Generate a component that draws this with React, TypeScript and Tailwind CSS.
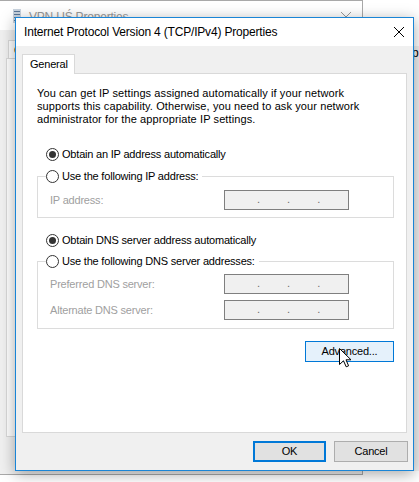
import React from "react";

const font = "font-['Liberation_Sans',Arial,sans-serif]";
const ui = "text-[11px] leading-[13px] tracking-[-0.2px]";

function Radio({ checked, label }: { checked?: boolean; label: string }) {
  return (
    <div className="flex items-center h-[13px]">
      <span className="w-[13px] h-[13px] rounded-full border border-[#333333] bg-white flex items-center justify-center shrink-0">
        {checked && <span className="w-[7px] h-[7px] rounded-full bg-[#333333]" />}
      </span>
      <span className={`ml-[3px] ${ui} text-black whitespace-nowrap`}>{label}</span>
    </div>
  );
}

function IpBox() {
  return (
    <div className="w-[125px] h-[20px] border border-[#7f7f7f] bg-[#f0f0f0] flex items-end pb-[4px] pl-[32px] gap-[27px] text-[11px] leading-[11px] text-[#6d6d6d]">
      <span>.</span>
      <span>.</span>
      <span>.</span>
    </div>
  );
}

function Row({ label }: { label: string }) {
  return (
    <div className="flex items-center">
      <span className={`w-[186px] pl-[12px] ${ui} text-[#a0a0a0] whitespace-nowrap`}>{label}</span>
      <IpBox />
    </div>
  );
}

function Cursor() {
  return (
    <svg width="13" height="20" viewBox="0 0 13 20" className="absolute left-[339px] top-[348px]">
      <path
        d="M0.5 0.5 L0.5 16.5 L4.5 12.8 L7.2 18.8 L9.6 17.8 L7 11.8 L12 11.8 Z"
        fill="#ffffff"
        stroke="#000000"
        strokeWidth="1"
      />
    </svg>
  );
}

export default function App() {
  return (
    <div className={`relative w-[419px] h-[482px] overflow-hidden bg-white ${font}`}>
      {/* far-back window sliver */}
      <div className="absolute left-[400px] top-[46px] w-[19px] h-[425px] bg-[#f0f0f0]">
        <span className="block ml-[12px] mt-[1px] text-[12px] leading-[13px] text-black">p</span>
      </div>

      {/* back window */}
      <div className="absolute left-0 top-0 w-[363px] h-[475px] border-t border-r border-b border-[#a9a9a9] bg-[#f0f0f0] flex flex-col">
        <div className="h-[29px] bg-white flex items-center shrink-0">
          <svg width="8" height="14" viewBox="0 0 8 14" className="ml-[13px]">
            <rect x="0" y="0" width="8" height="14" fill="#c9d3de" />
            <rect x="1" y="2" width="6" height="1" fill="#5b7696" />
            <rect x="1" y="5" width="6" height="1" fill="#5b7696" />
            <rect x="1" y="8" width="6" height="1" fill="#5b7696" />
            <rect x="1" y="11" width="6" height="1" fill="#5b7696" />
          </svg>
          <span className="ml-[8px] text-[12px] tracking-[-0.2px] text-[#999999] mt-[3px]">VPN UŚ Properties</span>
          <svg width="10" height="10" viewBox="0 0 10 10" className="ml-auto mr-[11px] mt-[3px]">
            <path d="M0 0 L10 10 M10 0 L0 10" stroke="#9a9a9a" strokeWidth="1" />
          </svg>
        </div>
        <div className="pl-[6px] pt-[10px] flex flex-col">
          <div className={`ml-[2px] w-[40px] h-[18px] border-t border-l border-r border-[#d9d9d9] bg-white pl-[5px] ${ui} leading-[18px] text-black`}>
            G
          </div>
          <div className="w-[352px] h-[379px] border border-[#d9d9d9] bg-white" />
        </div>
      </div>

      {/* front window */}
      <div className="absolute left-[15px] top-[17px] w-[399px] h-[454px] border border-[#1a85d6] bg-[#f0f0f0] flex flex-col shadow-[0_3px_14px_rgba(0,0,0,0.35)]">
        <div className="h-[28px] bg-white flex items-center shrink-0">
          <span className="ml-[8px] text-[12px] tracking-[-0.18px] text-black whitespace-nowrap">
            Internet Protocol Version 4 (TCP/IPv4) Properties
          </span>
          <svg width="10" height="10" viewBox="0 0 10 10" className="ml-auto mr-[9px]">
            <path d="M0 0 L10 10 M10 0 L0 10" stroke="#000000" strokeWidth="1" />
          </svg>
        </div>

        <div className="flex-1 flex flex-col px-[6px] pt-[8px]">
          <div className={`relative z-10 w-[53px] h-[20px] -mb-px border-t border-l border-r border-[#d9d9d9] bg-white pl-[7px] ${ui} leading-[18px] text-black`}>
            General
          </div>
          <div className="w-[385px] h-[360px] border border-[#d9d9d9] bg-white pl-[14px] pr-[12px] pt-[13px] flex flex-col">
            <p className="text-[11px] leading-[13px] tracking-[0.1px] text-black whitespace-nowrap">
              You can get IP settings assigned automatically if your network
              <br />
              supports this capability. Otherwise, you need to ask your network
              <br />
              administrator for the appropriate IP settings.
            </p>

            <div className="mt-[22px] ml-[9px]">
              <Radio checked label="Obtain an IP address automatically" />
            </div>

            <fieldset className="mt-[9px] border border-[#dcdcdc] p-0 pb-[7px] m-0 min-w-0">
              <legend className="ml-[8px] pr-[4px]">
                <Radio label="Use the following IP address:" />
              </legend>
              <div className="mt-[7px]">
                <Row label="IP address:" />
              </div>
            </fieldset>

            <div className="mt-[16px] ml-[9px]">
              <Radio checked label="Obtain DNS server address automatically" />
            </div>

            <fieldset className="mt-[8px] border border-[#dcdcdc] p-0 pb-[8px] m-0 min-w-0">
              <legend className="ml-[8px] pr-[4px]">
                <Radio label="Use the following DNS server addresses:" />
              </legend>
              <div className="mt-[6px] flex flex-col gap-[6px]">
                <Row label="Preferred DNS server:" />
                <Row label="Alternate DNS server:" />
              </div>
            </fieldset>

            <div className="mt-[12px] flex justify-end">
              <div className={`w-[89px] h-[21px] border border-[#0078d7] bg-[#e5f1fb] flex items-center justify-center ${ui} text-black`}>
                Advanced...
              </div>
            </div>
          </div>

          <div className="mt-[8px] flex justify-end gap-[8px] mr-[-1px]">
            <div className={`w-[73px] h-[21px] border-2 border-[#0078d7] bg-[#e1e1e1] flex items-center justify-center ${ui} text-black`}>
              OK
            </div>
            <div className={`w-[74px] h-[21px] border border-[#adadad] bg-[#e1e1e1] flex items-center justify-center ${ui} text-black`}>
              Cancel
            </div>
          </div>
        </div>
      </div>

      <Cursor />
    </div>
  );
}
